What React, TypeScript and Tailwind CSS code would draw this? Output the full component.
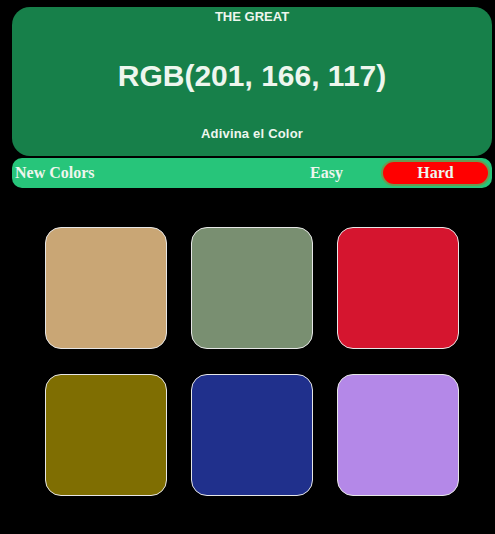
const squares = [
  "#c9a675",
  "#798f71",
  "#d5152f",
  "#7f6e02",
  "#20308c",
  "#b488e8",
]

export default function App() {
  return (
    <div className="w-[495px] h-[534px] bg-black overflow-hidden">
      <div className="pt-[7px] px-[12px] pr-[3px]">
        <div className="h-[149px] rounded-[18px] bg-[#17804a] flex flex-col items-center text-[#eef6ee] font-['Liberation_Sans',Arial,sans-serif] font-bold">
          <div className="mt-[2px] text-[13px] leading-[16px]">THE GREAT</div>
          <div className="mt-[34px] text-[30px] leading-[34px]">RGB(201, 166, 117)</div>
          <div className="mt-[33px] text-[13px] leading-[16px] tracking-[0.2px]">Adivina el Color</div>
        </div>
        <div className="mt-[2px] h-[30px] rounded-[10px] bg-[#27c57a] flex items-center font-['Liberation_Serif','Times_New_Roman',serif] font-bold text-[16px] text-[#eef6ee]">
          <span className="pl-[3px]">New Colors</span>
          <span className="ml-auto mr-[38px]">Easy</span>
          <span className="mr-[2px] w-[109px] h-[26px] rounded-full bg-[#ff0000] border-2 border-[#6a9a50] flex items-center justify-center">Hard</span>
        </div>
      </div>
      <div className="pl-[45px] pt-[39px] grid grid-cols-[122px_122px_122px] gap-x-[24px] gap-y-[25px]">
        {squares.map((c) => (
          <div
            key={c}
            className="h-[122px] rounded-[16px] border border-[#e6e6e6]"
            style={{ backgroundColor: c }}
          />
        ))}
      </div>
    </div>
  )
}
